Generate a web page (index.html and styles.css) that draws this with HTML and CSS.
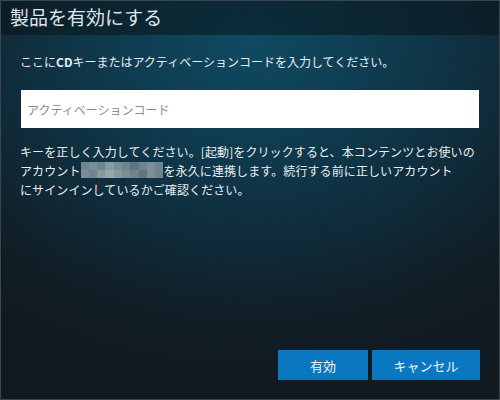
FILE: index.html
```html
<!DOCTYPE html>
<html lang="ja">
<head>
<meta charset="UTF-8">
<title>製品を有効にする</title>
<link rel="stylesheet" href="styles.css">
</head>
<body>
<div class="window">
    <div class="title">製品を有効にする</div>
    <div class="content">
        <p class="lead">ここに<b>CD</b>キーまたはアクティベーションコードを入力してください。</p>
        <input class="code" type="text" placeholder="アクティベーションコード">
        <p class="note">キーを正しく入力してください。[起動]をクリックすると、本コンテンツとお使いの<br>アカウント<span class="masked"><i class="c1"></i><i class="c2"></i><i class="c1"></i><i class="c3"></i><i class="c2"></i><i class="c1"></i><i class="c4"></i><i class="c1"></i><i class="c2"></i><i class="c1"></i><i class="c2"></i><i class="c1"></i><i class="c3"></i><i class="c5"></i><i class="c3"></i><i class="c2"></i><i class="c1"></i><i class="c4"></i><i class="c2"></i><i class="c1"></i></span>を永久に連携します。続行する前に正しいアカウント<br>にサインインしているかご確認ください。</p>
    </div>
    <div class="actions">
        <button class="btn ok">有効</button>
        <button class="btn cancel">キャンセル</button>
    </div>
</div>
</body>
</html>
```

FILE: styles.css
```css
html, body {
    margin: 0;
    padding: 0;
    background: #111a20;
}

.window {
    box-sizing: border-box;
    width: 500px;
    height: 400px;
    display: flex;
    flex-direction: column;
    font-family: "Noto Sans CJK JP", "Noto Sans", sans-serif;
    color: #e9eef0;
    border: 1px solid #3a474f;
    background: radial-gradient(ellipse 420px 330px at 250px 40px, #0f4b62 0%, #0f3446 45%, #111e26 85%, #111a20 100%);
}

.title {
    height: 34px;
    line-height: 32px;
    padding-left: 9px;
    font-size: 19px;
    color: #dfe5e8;
    background: rgba(10, 20, 26, 0.55);
}

.content {
    padding: 0 19px;
}

.lead {
    margin: 17px 0 0;
    font-size: 12px;
    line-height: 19px;
}

.lead b {
    font-weight: bold;
}

.code {
    display: block;
    box-sizing: border-box;
    width: calc(100% - 2px);
    height: 38px;
    margin: 19px 1px 0;
    padding: 0 6px;
    border: none;
    outline: none;
    background: #fff;
    font-family: "Noto Sans CJK JP", sans-serif;
    font-size: 12px;
}

.code::placeholder {
    color: #8c8c8c;
}

.note {
    margin: 14px 0 0;
    font-size: 12px;
    line-height: 19px;
    letter-spacing: 0.1px;
    white-space: nowrap;
}

.masked {
    display: inline-flex;
    flex-wrap: wrap;
    width: 83px;
    height: 16px;
    vertical-align: top;
    margin-top: 1px;
    line-height: 0;
}

.masked i {
    display: block;
    width: 8.3px;
    height: 8px;
}

.masked .c1 { background: #6f848d; }
.masked .c2 { background: #7a8e96; }
.masked .c3 { background: #889aa1; }
.masked .c4 { background: #5e7683; }
.masked .c5 { background: #97a8ad; }

.actions {
    margin-top: auto;
    padding: 0 19px 19px 0;
    display: flex;
    justify-content: flex-end;
    gap: 4px;
}

.btn {
    height: 30px;
    border: none;
    background: #0a78c1;
    color: #eef4f8;
    font-family: "Noto Sans CJK JP", sans-serif;
    font-size: 13px;
    padding: 0;
}

.btn.ok {
    width: 90px;
}

.btn.cancel {
    width: 108px;
}
```
